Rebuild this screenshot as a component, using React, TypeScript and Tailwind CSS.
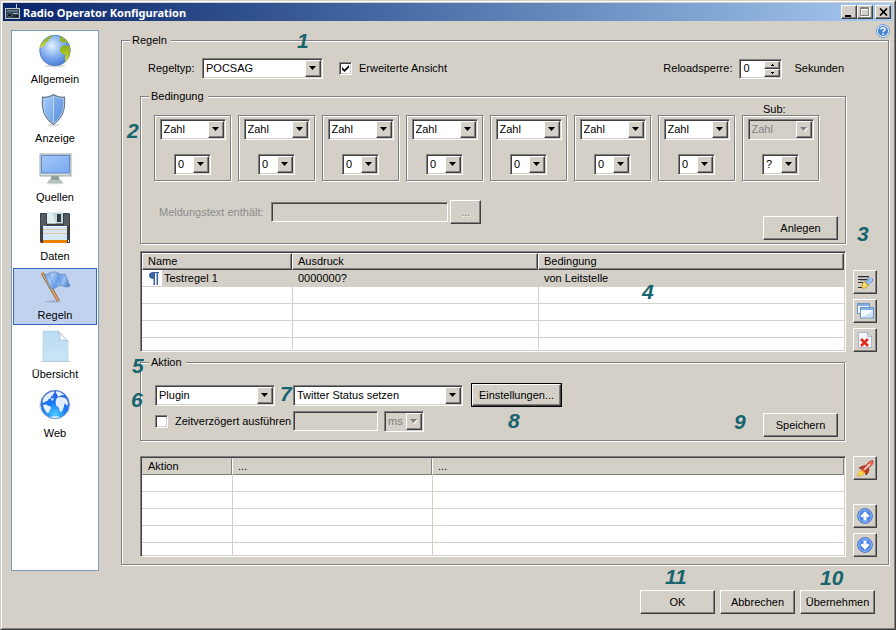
import { memo, useState } from 'react';
import type { ReactNode } from 'react';
import cls from 'clsx';

const SUNKEN =
  'border border-t-[#808080] border-l-[#808080] border-b-white border-r-white shadow-[inset_1px_1px_0_#404040,inset_-1px_-1px_0_#d4d0c8]';
const RAISED =
  'border border-t-white border-l-white border-b-[#404040] border-r-[#404040] bg-[#d4d0c8] shadow-[inset_-1px_-1px_0_#808080]';
const ETCHED = 'border border-[#808080] shadow-[1px_1px_0_#fff,inset_1px_1px_0_#fff]';

const GlobeIcon = () => (
  <svg width="34" height="34" viewBox="0 0 34 34">
    <defs>
      <radialGradient id="globe" cx="0.4" cy="0.35" r="0.7">
        <stop offset="0" stopColor="#e4f1ff" />
        <stop offset="0.5" stopColor="#86b2f2" />
        <stop offset="1" stopColor="#4377d4" />
      </radialGradient>
      <linearGradient id="land" x1="0" y1="0" x2="0" y2="1">
        <stop offset="0" stopColor="#86ab1c" />
        <stop offset="1" stopColor="#d2dc2c" />
      </linearGradient>
    </defs>
    <ellipse cx="17" cy="32" rx="11" ry="1.5" fill="#dedede" />
    <circle cx="17" cy="16.5" r="15.3" fill="url(#globe)" stroke="#5676b4" strokeWidth="0.8" />
    <path d="M5 8c3-4 6-5.500 9-6.200l-.5 2.200-3 1 .5 2-3.500 1.500-1 3-3 1.500-1.500 1-.5-1c0-1 1.500-3 3.500-5z" fill="url(#land)" />
    <path d="M22 2.500c3 .5 6 3 8 6l-2 .5-2-1.500-1.500 2-1-2.500-2 1 .5-2.500z" fill="#93b52a" />
    <path d="M22 14l4-3 3 1 2-1c1.500 4 1.500 9-.5 13l-3 4.500-.5-5 .5-3-3.500-.5-2-3z" fill="url(#land)" />
  </svg>
);

const ShieldIcon = () => (
  <svg width="34" height="34" viewBox="0 0 34 34">
    <defs>
      <linearGradient id="shield" x1="0" y1="0" x2="1" y2="1">
        <stop offset="0" stopColor="#a9cdf8" />
        <stop offset="1" stopColor="#5b93e0" />
      </linearGradient>
    </defs>
    <ellipse cx="15.500" cy="32" rx="6" ry="1.300" fill="#dcdcdc" />
    <path d="M15.500 1c3.500 2 7.500 3 11.500 2.500.8 11 .2 20-11.500 28.500C3.800 24 3.200 14.500 4 3.500c4 .5 8-.5 11.500-2.500z" fill="#667a94" />
    <path d="M15.500 3c3.300 1.700 6.500 2.700 10 2.500.5 10-.5 18-10 24.700C6 23.500 5 15.500 5.500 5.500c3.500.2 6.700-.8 10-2.500z" fill="url(#shield)" stroke="#bcd7f8" strokeWidth="0.8" />
    <path d="M15.500 3.500v26c8-6 9.500-13 9.300-23.500-3.300 0-6.300-1-9.300-2.500z" fill="#3f7bd2" fillOpacity="0.2" />
    <path d="M15.500 4v25" stroke="#c8defa" strokeWidth="0.8" />
  </svg>
);

const MonitorIcon = () => (
  <svg width="34" height="34" viewBox="0 0 34 34">
    <defs>
      <linearGradient id="screen" x1="0" y1="0" x2="1" y2="1">
        <stop offset="0" stopColor="#a5c8fa" />
        <stop offset="1" stopColor="#77a8f0" />
      </linearGradient>
    </defs>
    <ellipse cx="17" cy="31" rx="9" ry="1.300" fill="#cfd6d4" />
    <path d="M13 23h8v5h-8z" fill="#8d9b9b" />
    <path d="M10 30l2-2.500h10l2 2.500z" fill="#bccac8" stroke="#7f8f8e" strokeWidth="0.5" />
    <rect x="2" y="2" width="31" height="22" fill="#d2deda" stroke="#9dabab" />
    <rect x="3.500" y="3.500" width="28" height="17.500" fill="url(#screen)" stroke="#6489c4" />
  </svg>
);

const FloppyIcon = () => (
  <svg width="34" height="34" viewBox="0 0 34 34">
    <path d="M2 2h29l1 1v29H3l-1-1z" fill="#3b4146" />
    <path d="M3 3h5v12H3zM26 3h5v12h-5z" fill="#565d62" />
    <rect x="9" y="1.500" width="16" height="11" fill="#c0dadb" />
    <path d="M9 1.500h5l4 11H9z" fill="#e0eeee" />
    <rect x="19" y="3" width="4" height="8" fill="#34393c" />
    <rect x="5" y="15" width="24" height="14" fill="#d3e8fb" />
    <path d="M5 18.500h24M5 22.500h24" stroke="#eac39c" strokeWidth="1" />
    <path d="M5 15.500h24" stroke="#f2f9ff" />
    <rect x="5" y="29" width="24" height="3" fill="#ec8000" />
    <rect x="30" y="29" width="1" height="2" fill="#fff" />
  </svg>
);

const FlagIcon = () => (
  <svg width="34" height="34" viewBox="0 0 34 34">
    <defs>
      <linearGradient id="flag" x1="0" y1="0.200" x2="1" y2="0.500">
        <stop offset="0" stopColor="#6c9be2" />
        <stop offset="0.300" stopColor="#a8caf6" />
        <stop offset="0.550" stopColor="#6b9de4" />
        <stop offset="0.800" stopColor="#96bef2" />
        <stop offset="1" stopColor="#5787cf" />
      </linearGradient>
    </defs>
    <ellipse cx="15" cy="31.500" rx="8" ry="1.200" fill="#a3b1cf" />
    <path d="M4.500 3.500L20.500 31" stroke="#7a5230" strokeWidth="3.200" />
    <path d="M4.500 3.500L20.500 31" stroke="#e2a869" strokeWidth="1.800" />
    <path d="M6 4c3 2 6-2.500 10-2 4 .3 6 3.500 11 2l5 12c-4 2.500-6-.5-9-.5-4 0-5 4-10 3z" fill="url(#flag)" stroke="#5f86c2" strokeWidth="0.800" />
    <path d="M11 4l5 13M19 3.500l4 11" stroke="#4d80cc" strokeWidth="0.700" opacity="0.600" />
    <circle cx="4.500" cy="3.800" r="1.600" fill="#c98c4c" />
  </svg>
);

const PageIcon = () => (
  <svg width="34" height="34" viewBox="0 0 34 34">
    <defs>
      <linearGradient id="page" x1="0" y1="0" x2="0" y2="1">
        <stop offset="0" stopColor="#bcdcf1" />
        <stop offset="1" stopColor="#c9e4f7" />
      </linearGradient>
    </defs>
    <path d="M3 32.500h29" stroke="#c4cdd3" />
    <path d="M5 2h15l10 10.500V32H5z" fill="url(#page)" stroke="#aed0e6" strokeWidth="0.600" />
    <path d="M20 2l10 10.500c-3-1.500-6-2-8.500-1 .7-3.500 0-7-1.500-9.500z" fill="#f3faff" stroke="#97b8cc" strokeWidth="0.700" />
  </svg>
);

const WebIcon = () => (
  <svg width="34" height="34" viewBox="0 0 34 34">
    <defs>
      <radialGradient id="web" cx="0.5" cy="0.850" r="0.850">
        <stop offset="0" stopColor="#4fd0ff" />
        <stop offset="0.450" stopColor="#1a7cf6" />
        <stop offset="1" stopColor="#2b5fd6" />
      </radialGradient>
    </defs>
    <ellipse cx="17" cy="17" rx="16" ry="13.500" fill="#e4e8ed" />
    <circle cx="17" cy="16.500" r="14.300" fill="url(#web)" stroke="#7d93bd" strokeWidth="0.800" />
    <g fill="#e3effd">
      <path d="M8 7c2-2 5-3.500 8-3.800 1 1.300.5 2.300-1 2.800.5 1.500-.5 2-2 2.300.3 1.700-1 2.700-2.500 2.700-.5 1.500-1.500 2.500-3 2.500l-2 1.500-1-1c.3-3 1.500-5.200 3.500-7z" />
      <path d="M5 17c2-1 4-.5 5 .8 1.500.2 3 .7 3 2.200-.5 1.500-1.500 2.500-2 4-.3 1.200-1.200 1.500-2 .8C7 23 5.500 20 5 17z" />
      <path d="M18 3.300c3 .2 6 1.500 8 3.500-1 .8-2.500.2-3.500 1-1 1-3 1-3-.5-.8-1.200-2-2.500-1.500-4z" />
      <path d="M19 10c1.500-1.200 4-1.300 6-.5 2 .2 4 1.500 4.500 3.500.5 1.500.5 3 0 4.500-1.500.3-1.500-1.500-2.800-2-1 1-.2 3-1.200 4.500-.7 1.500-1 3.500-2.500 4-1.700-.3-1.500-2.500-2-4-.7-1.200-2.500-1.500-3-3-.4-2.500-.5-5.300 1-7z" />
      <path d="M12 29c2.500-1.500 7.500-1.500 10 0-3 1.700-7 1.700-10 0z" opacity="0.800" />
    </g>
    <path d="M12.500 11l2.500-1.500 1 2-2 1.500z" fill="#b8d6fb" />
  </svg>
);

const RadioIcon = () => (
  <svg width="16" height="16" viewBox="0 0 16 16">
    <path d="M11.500 0v5" stroke="#c8ccd0" />
    <rect x="0.500" y="4.500" width="14" height="10" fill="#30404f" stroke="#c4c8cc" />
    <rect x="2" y="6" width="11" height="2" fill="#5d7184" />
    <circle cx="4.500" cy="11" r="2" fill="#111" stroke="#77838e" strokeWidth="0.600" />
    <rect x="8" y="9" width="5" height="1" fill="#9dbcd6" />
    <circle cx="9.500" cy="12" r="1" fill="#111" />
    <circle cx="12" cy="12" r="1" fill="#111" />
  </svg>
);

const HelpIcon = () => (
  <svg width="14" height="14" viewBox="0 0 14 14">
    <circle cx="7" cy="7" r="6.500" fill="#dde9f8" stroke="#6f9ad2" />
    <circle cx="7" cy="7" r="5" fill="#4482d0" />
    <path d="M5 5.400C5 3.200 9 3.200 9 5.400 9 6.800 7 6.700 7 8.300" fill="none" stroke="#fff" strokeWidth="1.500" />
    <rect x="6.200" y="9.300" width="1.600" height="1.500" fill="#fff" />
  </svg>
);

const EditIcon = () => (
  <svg width="16" height="16" viewBox="0 0 16 16">
    <path d="M1 2.500h11M1 5.500h9M1 8.500h5M1 13.500h4" stroke="#2c2c2c" />
    <path d="M1 3.500h10M3 6.500h6" stroke="#a0a0a0" />
    <path d="M8 9l4-5.500 3.500 1.500v2L10 12z" fill="#8ab8ee" stroke="#4878b8" strokeWidth="0.800" />
    <path d="M12.500 4l1.500.5.500 1.500-3 4" fill="none" stroke="#c6defa" />
    <path d="M5 12.500c0-2.500 1-4 2.800-4.500l3.200 3c-1 2.500-3 3.500-6 3z" fill="#ffe067" stroke="#c28c14" strokeWidth="0.800" />
  </svg>
);

const CopyIcon = () => (
  <svg width="17" height="16" viewBox="0 0 17 16">
    <rect x="0.500" y="0.500" width="12" height="10" fill="#eef5fd" stroke="#7196c4" />
    <rect x="1" y="1" width="11" height="2" fill="#80aee4" />
    <rect x="3.500" y="4.500" width="13" height="10.500" fill="#f4f9ff" stroke="#6a92c4" />
    <rect x="4" y="5" width="12" height="2" fill="#84b2ea" />
    <path d="M5 14h11V8z" fill="#cfe2f8" />
  </svg>
);

const DeleteIcon = () => (
  <svg width="16" height="16" viewBox="0 0 16 16">
    <path d="M1.500.5h9l4 4v11h-13z" fill="#f3f6fb" stroke="#b0b6c2" />
    <path d="M10.500.5v4h4z" fill="#dbe2ec" stroke="#a2a9b5" strokeWidth="0.800" />
    <path d="M4 7l7 7M11 7l-7 7" stroke="#e32b1a" strokeWidth="2.500" />
  </svg>
);

const RocketIcon = () => (
  <svg width="17" height="17" viewBox="0 0 17 17">
    <path d="M1 16c0-3 1-5 3-6l3 3c-1 2-3 3-6 3z" fill="#ffd84a" stroke="#d89a18" strokeWidth="0.600" />
    <path d="M2 8l4-2 3-.500L12 9l-1 4-2 2-1-3-4-3.500z" fill="#c23c18" stroke="#7d2412" strokeWidth="0.700" />
    <path d="M5 10l6-7c1.500-1.500 3-2.200 5-2.200 0 2-.5 3.500-2 5l-7 6z" fill="#ef6a4c" stroke="#b02c1a" strokeWidth="0.800" />
    <path d="M7 9l5.500-5.500c.5.2 1 .6 1 1.200L8 10z" fill="#f4dcd4" />
    <path d="M4 10l4 3" stroke="#f79a40" strokeWidth="1.200" />
  </svg>
);

const ArrowIcon = ({ down = false }: { down?: boolean }) => (
  <svg width="16" height="16" viewBox="0 0 16 16">
    <circle cx="8" cy="8" r="7.400" fill="#4a86ea" stroke="#3f68b8" strokeWidth="0.800" />
    <circle cx="8" cy="8" r="6.300" fill="none" stroke="#a4c5f7" strokeWidth="0.900" />
    <path
      d={
        down
          ? 'M6.500 3.500h3v4l1.500-1 1.500 1.500L8 12.700 3.500 8 5 6.500l1.500 1z'
          : 'M6.500 12.500h3v-4l1.500 1 1.500-1.500L8 3.300 3.500 8 5 9.500l1.500-1z'
      }
      fill="#fff"
    />
  </svg>
);

const ParagraphIcon = () => (
  <svg width="10" height="13" viewBox="0 0 10 13">
    <path d="M4 0h6v1H9v12H7.500V1H6v12H4.500V7C1.500 7 0 5.500 0 3.500S1.500 0 4 0z" fill="#3d62a4" />
  </svg>
);

interface ComboProps {
  id?: string;
  label?: string;
  value: string;
  disabled?: boolean;
  className?: string;
}

const Combo = ({ id, label, value, disabled, className }: ComboProps) => (
  <div className={cls('relative h-[21px] flex-none', className)}>
    <select
      id={id}
      aria-label={label}
      disabled={disabled}
      className={cls(
        'h-full w-full appearance-none pl-[3px] pr-4 leading-[17px] outline-none disabled:opacity-100',
        SUNKEN,
        disabled ? 'bg-[#d4d0c8] text-[#808080]' : 'bg-white',
      )}
    >
      <option>{value}</option>
    </select>
    <span
      className={cls(
        'pointer-events-none absolute inset-y-[2px] right-[2px] flex w-4 items-center justify-center',
        RAISED,
      )}
    >
      <svg width="8" height="5" viewBox="0 0 8 5">
        {disabled && <path d="M1 1h7L4.500 5z" fill="#fff" />}
        <path d="M0 0h7L3.500 4z" fill={disabled ? '#808080' : '#000'} />
      </svg>
    </span>
  </div>
);

const PushButton = ({ children }: { children: ReactNode }) => (
  <button type="button" className={cls('h-6 w-[75px] flex-none text-center', RAISED)}>
    {children}
  </button>
);

const ToolButton = ({ label, children }: { label: string; children: ReactNode }) => (
  <button
    type="button"
    aria-label={label}
    className={cls('flex h-6 w-6 flex-none items-center justify-center', RAISED)}
  >
    {children}
  </button>
);

const Group = ({ title, children }: { title: string; children: ReactNode }) => (
  <fieldset className={cls('min-w-0 flex-1', ETCHED)}>
    <legend className="ml-2 bg-[#d4d0c8] pl-[2px] pr-1">{title}</legend>
    {children}
  </fieldset>
);

const Check = ({ id, defaultChecked }: { id: string; defaultChecked?: boolean }) => {
  const [checked, setChecked] = useState(!!defaultChecked);
  return (
    <span className="relative flex h-[13px] w-[13px] flex-none">
      <input
        id={id}
        type="checkbox"
        checked={checked}
        onChange={(e) => setChecked(e.target.checked)}
        className={cls('h-[13px] w-[13px] appearance-none bg-white', SUNKEN)}
      />
      {checked && (
        <svg className="pointer-events-none absolute inset-[3px]" width="7" height="7" viewBox="0 0 7 7">
          <path d="M0 2l2.500 2.500L7 0v2.500L2.500 7 0 4.500z" />
        </svg>
      )}
    </span>
  );
};

const navItems = [
  { name: 'Allgemein', icon: <GlobeIcon /> },
  { name: 'Anzeige', icon: <ShieldIcon /> },
  { name: 'Quellen', icon: <MonitorIcon /> },
  { name: 'Daten', icon: <FloppyIcon /> },
  { name: 'Regeln', icon: <FlagIcon /> },
  { name: 'Übersicht', icon: <PageIcon /> },
  { name: 'Web', icon: <WebIcon /> },
];

const Sidebar = memo(() => {
  const [active, setActive] = useState('Regeln');
  return (
    <nav className="flex w-[88px] flex-none flex-col gap-[2px] self-stretch border border-[#7f9db9] bg-white p-px">
      {navItems.map((item) => (
        <button
          key={item.name}
          type="button"
          onClick={() => setActive(item.name)}
          className={cls(
            'flex h-[57px] flex-col items-center gap-[5px] border pt-px',
            item.name === active ? 'border-[#316ac5] bg-[#c1d2ee]' : 'border-transparent',
          )}
        >
          {item.icon}
          {item.name}
        </button>
      ))}
    </nav>
  );
});

Sidebar.displayName = 'Sidebar';

const digits = ['0', '0', '0', '0', '0', '0', '0', '?'];

const Conditions = () => (
  <Group title="Bedingung">
    <div className="flex items-end gap-[7px] pl-[13px]">
      {digits.map((digit, i) => {
        const isSub = i === digits.length - 1;
        return (
          <div key={i} className="w-[77px] flex-none">
            {isSub && <div className="pl-[21px] leading-3">Sub:</div>}
            <div className={cls('flex h-[66px] flex-col items-center gap-[14px] pt-[3px]', ETCHED)}>
              <Combo
                label={isSub ? 'Sub Typ' : `Stelle ${i + 1} Typ`}
                value="Zahl"
                disabled={isSub}
                className="w-[66px]"
              />
              <Combo
                label={isSub ? 'Sub Wert' : `Stelle ${i + 1} Wert`}
                value={digit}
                className="w-[37px]"
              />
            </div>
          </div>
        );
      })}
    </div>
    <div className="mt-[19px] flex h-10 justify-between pl-[18px] pr-[7px]">
      <div className="flex h-6 items-center">
        <label htmlFor="message" className="w-28 text-[#8c8c8c]">
          Meldungstext enthält:
        </label>
        <input id="message" disabled className={cls('h-5 w-[177px] px-1', SUNKEN)} />
        <button
          type="button"
          disabled
          className={cls('ml-[2px] h-6 w-[31px] text-[#808080] text-shadow-[1px_1px_0_#fff]', RAISED)}
        >
          ...
        </button>
      </div>
      <div className="self-end">
        <PushButton>Anlegen</PushButton>
      </div>
    </div>
    <div className="h-[3px]" />
  </Group>
);

const emptyRows = [0, 1, 2];
const cell = 'border-b border-[#d4d0c8]';
const cellNext = 'border-b border-l border-[#d4d0c8]';

const RuleTable = () => {
  const th =
    'h-[17px] border border-t-white border-l-white border-b-[#404040] border-r-[#404040] bg-[#d4d0c8] pl-[5px] text-left font-normal leading-[13px] shadow-[inset_-1px_-1px_0_#808080]';
  return (
    <div className={cls('min-w-0 flex-1 bg-white p-px', SUNKEN)}>
      <table className="w-full table-fixed border-separate border-spacing-0">
        <colgroup>
          <col className="w-[150px]" />
          <col className="w-[246px]" />
          <col />
        </colgroup>
        <thead>
          <tr>
            <th className={th}>Name</th>
            <th className={th}>Ausdruck</th>
            <th className={th}>Bedingung</th>
          </tr>
        </thead>
        <tbody>
          <tr className="bg-[#d4d0c8]">
            <td className={cell}>
              <div className="flex h-4 items-center">
                <span className="flex h-4 w-5 items-center justify-center bg-white pl-1">
                  <ParagraphIcon />
                </span>
                <span className="pl-[2px]">Testregel 1</span>
              </div>
            </td>
            <td className={cls(cellNext, 'pl-[5px]')}>0000000?</td>
            <td className={cls(cellNext, 'pl-[5px]')}>von Leitstelle</td>
          </tr>
          {emptyRows.map((row) => (
            <tr key={row} className="h-[17px]">
              <td className={cell} />
              <td className={cellNext} />
              <td className={cellNext} />
            </tr>
          ))}
          <tr className="h-[11px]">
            <td />
            <td className="border-l border-[#d4d0c8]" />
            <td className="border-l border-[#d4d0c8]" />
          </tr>
        </tbody>
      </table>
    </div>
  );
};

const ActionTable = () => {
  const th =
    'h-[17px] border border-t-[#d4d0c8] border-l-white border-b-[#808080] border-r-[#808080] bg-[#d4d0c8] pl-[5px] text-left font-normal leading-[13px] first:border-l-[#d4d0c8]';
  return (
    <div className={cls('min-w-0 flex-1 bg-white p-px', SUNKEN)}>
      <table className="w-full table-fixed border-separate border-spacing-0">
        <colgroup>
          <col className="w-[90px]" />
          <col className="w-[200px]" />
          <col />
        </colgroup>
        <thead>
          <tr>
            <th className={th}>Aktion</th>
            <th className={th}>...</th>
            <th className={th}>...</th>
          </tr>
        </thead>
        <tbody>
          {[0, ...emptyRows].map((_, i) => (
            <tr key={i} className="h-[17px]">
              <td className={cell} />
              <td className={cellNext} />
              <td className={cellNext} />
            </tr>
          ))}
          <tr className="h-3">
            <td />
            <td className="border-l border-[#d4d0c8]" />
            <td className="border-l border-[#d4d0c8]" />
          </tr>
        </tbody>
      </table>
    </div>
  );
};

const Action = () => (
  <Group title="Aktion">
    <div className="flex items-center pl-[14px] pt-[14px]">
      <Combo label="Aktionstyp" value="Plugin" className="w-[120px]" />
      <Combo label="Plugin" value="Twitter Status setzen" className="ml-[18px] w-[170px]" />
      <span className="ml-2 flex border border-black">
        <button type="button" className={cls('h-[22px] w-[89px]', RAISED)}>
          Einstellungen...
        </button>
      </span>
    </div>
    <div className="mt-[3px] flex items-start pb-[3px] pl-[14px] pr-[6px]">
      <div className="flex h-[22px] flex-1 items-center">
        <Check id="delayed" />
        <label htmlFor="delayed" className="w-[125px] pl-[7px]">
          Zeitverzögert ausführen
        </label>
        <input aria-label="Verzögerung" disabled className={cls('h-5 w-[85px] px-1', SUNKEN)} />
        <Combo label="Einheit" value="ms" disabled className="ml-[6px] w-10" />
      </div>
      <div className="pt-[3px]">
        <PushButton>Speichern</PushButton>
      </div>
    </div>
  </Group>
);

const Spinner = ({ id }: { id: string }) => {
  const [count, setCount] = useState(0);
  return (
    <div className={cls('flex h-5 w-[43px] bg-white p-px', SUNKEN)}>
      <input
        id={id}
        value={count}
        onChange={(e) => setCount(Number(e.target.value) || 0)}
        className="min-w-0 flex-1 pl-[2px] outline-none"
      />
      <div className="flex w-4 flex-col">
        <button
          type="button"
          aria-label="Mehr"
          onClick={() => setCount(count + 1)}
          className={cls('flex flex-1 items-center justify-center', RAISED)}
        >
          <svg width="3" height="2" viewBox="0 0 3 2">
            <path d="M0 2h3V1H2V0H1v1H0z" />
          </svg>
        </button>
        <button
          type="button"
          aria-label="Weniger"
          onClick={() => setCount(Math.max(0, count - 1))}
          className={cls('flex flex-1 items-center justify-center', RAISED)}
        >
          <svg width="3" height="2" viewBox="0 0 3 2">
            <path d="M0 0h3v1H2v1H1V1H0z" />
          </svg>
        </button>
      </div>
    </div>
  );
};

const TitleBar = () => {
  const box = cls('flex h-[14px] w-4 items-center justify-center', RAISED);
  return (
    <header className="flex h-[18px] items-center bg-linear-to-r from-[#0a246a] to-[#a6caf0] pl-[2px] pr-[2px]">
      <RadioIcon />
      <h1 className="flex-1 pl-[2px] font-['Noto_Sans',sans-serif] text-[11px] font-bold text-white">
        Radio Operator Konfiguration
      </h1>
      <button type="button" aria-label="Minimieren" className={box}>
        <svg width="10" height="9" viewBox="0 0 10 9">
          <path d="M1 7h6v2H1z" />
        </svg>
      </button>
      <button type="button" aria-label="Maximieren" disabled className={box}>
        <svg width="10" height="10" viewBox="0 0 10 10">
          <path d="M1.500 1.500h8v8h-8zM1 2.500h9" fill="none" stroke="#fff" />
          <path d="M.5.500h8v8h-8zM0 1.500h9" fill="none" stroke="#808080" />
        </svg>
      </button>
      <button type="button" aria-label="Schließen" className={cls(box, 'ml-[2px]')}>
        <svg width="9" height="8" viewBox="0 0 9 8">
          <path d="M1 .5l7 7M8 .5l-7 7" stroke="#000" strokeWidth="1.700" />
        </svg>
      </button>
    </header>
  );
};

// numbered callouts that lie over the dialog
const callouts = [
  { n: 1, pos: 'left-[296px] top-[29px]' },
  { n: 2, pos: 'left-[126px] top-[119px]' },
  { n: 3, pos: 'left-[856px] top-[222px]' },
  { n: 4, pos: 'left-[641px] top-[280px]' },
  { n: 5, pos: 'left-[131px] top-[354px]' },
  { n: 6, pos: 'left-[130px] top-[388px]' },
  { n: 7, pos: 'left-[279px] top-[382px]' },
  { n: 8, pos: 'left-[507px] top-[409px]' },
  { n: 9, pos: 'left-[733px] top-[410px]' },
  { n: 10, pos: 'left-[819px] top-[566px]' },
  { n: 11, pos: 'left-[664px] top-[565px]' },
];

const App = () => (
  <div className="relative flex min-h-screen flex-col border border-b-[#404040] border-l-[#d4d0c8] border-r-[#404040] border-t-[#d4d0c8] bg-[#d4d0c8] font-['Liberation_Sans',Arial,sans-serif] text-[11px] leading-[13px] text-black">
    <div className="flex flex-1 flex-col border border-b-[#808080] border-l-white border-r-[#808080] border-t-white p-px">
      <TitleBar />
      <div className="flex gap-[22px] pl-2 pr-1 pt-[9px]">
        <Sidebar />
        <main className="relative flex min-w-0 flex-1 flex-col pb-[6px] pt-1">
          <button type="button" aria-label="Hilfe" className="absolute -right-px -top-[6px]">
            <HelpIcon />
          </button>
          <Group title="Regeln">
            <div className="flex h-8 items-center pl-[26px] pr-11 pt-[11px]">
              <label htmlFor="ruletype" className="w-[54px]">
                Regeltyp:
              </label>
              <Combo id="ruletype" value="POCSAG" className="w-[121px]" />
              <div className="flex flex-1 items-center pl-4">
                <Check id="advanced" defaultChecked />
                <label htmlFor="advanced" className="pl-[7px]">
                  Erweiterte Ansicht
                </label>
              </div>
              <label htmlFor="reload" className="pr-[7px]">
                Reloadsperre:
              </label>
              <Spinner id="reload" />
              <span className="pl-3">Sekunden</span>
            </div>
            <div className="pb-[7px] pl-[18px] pr-[11px]">
              <div className="mt-[11px] flex pr-[31px]">
                <Conditions />
              </div>
              <div className="mt-[7px] flex gap-[7px]">
                <RuleTable />
                <div className="flex flex-col gap-[5px] pt-[19px]">
                  <ToolButton label="Regel bearbeiten">
                    <EditIcon />
                  </ToolButton>
                  <ToolButton label="Regel kopieren">
                    <CopyIcon />
                  </ToolButton>
                  <ToolButton label="Regel löschen">
                    <DeleteIcon />
                  </ToolButton>
                </div>
              </div>
              <div className="mt-1 flex pr-8">
                <Action />
              </div>
              <div className="mt-[15px] flex gap-[7px]">
                <ActionTable />
                <div className="flex flex-col gap-[5px]">
                  <ToolButton label="Aktion ausführen">
                    <RocketIcon />
                  </ToolButton>
                  <div className="flex-1" />
                  <ToolButton label="Nach oben">
                    <ArrowIcon />
                  </ToolButton>
                  <ToolButton label="Nach unten">
                    <ArrowIcon down />
                  </ToolButton>
                </div>
              </div>
            </div>
          </Group>
        </main>
      </div>
      <footer className="flex justify-end gap-[5px] pb-3 pr-[18px] pt-[19px]">
        <PushButton>OK</PushButton>
        <PushButton>Abbrechen</PushButton>
        <PushButton>Übernehmen</PushButton>
      </footer>
    </div>
    {callouts.map(({ n, pos }) => (
      <span
        key={n}
        className={cls(
          'pointer-events-none absolute text-[21px] font-bold italic leading-[21px] text-[#17646e]',
          pos,
        )}
      >
        {n}
      </span>
    ))}
  </div>
);

export default App;
